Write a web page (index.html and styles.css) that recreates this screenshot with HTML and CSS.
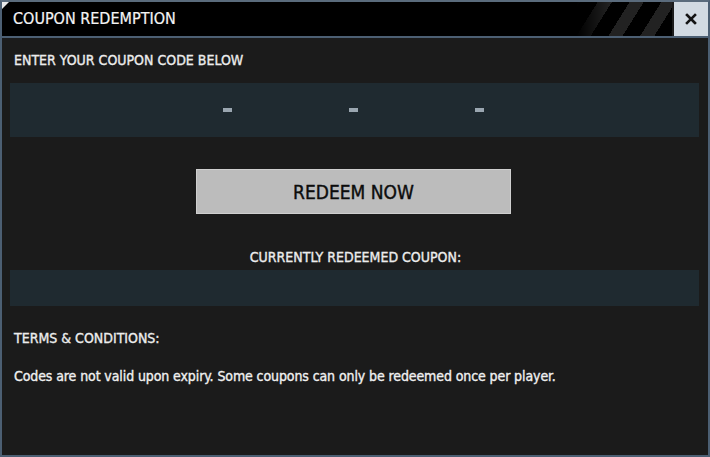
FILE: index.html
```html
<!DOCTYPE html>
<html>
<head>
  <title>Coupon Redemption</title>
  <link rel="stylesheet" href="styles.css">
</head>
<body>
  <div class="window">
    <div class="header">
      <div class="title">
        <span class="corner"></span>
        COUPON REDEMPTION
        <div class="stripes"></div>
      </div>
      <div class="close">
        <svg width="12" height="12" viewBox="0 0 12 12">
          <path d="M2 2 L10 10 M10 2 L2 10" stroke="#141414" stroke-width="2.6" stroke-linecap="square"/>
        </svg>
      </div>
    </div>

    <div class="content">
      <p class="label">ENTER YOUR COUPON CODE BELOW</p>
      <div class="code-field">
        <span class="dash"></span>
        <span class="dash"></span>
        <span class="dash"></span>
      </div>

      <div class="actions">
        <button class="redeem">REDEEM NOW</button>
      </div>

      <p class="label center">CURRENTLY REDEEMED COUPON:</p>
      <div class="current-field"></div>

      <p class="label terms">TERMS &amp; CONDITIONS:</p>
      <p class="note">Codes are not valid upon expiry. Some coupons can only be redeemed once per player.</p>
    </div>
  </div>
</body>
</html>
```

FILE: styles.css
```css
html {
  width: 100vw;
  height: 100vh;
}

body {
  margin: 0;
  background-color: #3e4a56;
  font-family: "DejaVu Sans Condensed", sans-serif;
}

.window {
  height: 457px;
  box-sizing: border-box;
  border: 2px solid #4c5f73;
  border-top-color: #5a6b7c;
  background-color: #1b1b1b;
  display: flex;
  flex-direction: column;
}

.header {
  display: flex;
  height: 34px;
  border-bottom: 2px solid #4c5f73;
}

.title {
  position: relative;
  flex: 1;
  background-color: #000;
  color: #f4f4f4;
  font-size: 16px;
  line-height: 34px;
  padding-left: 11px;
  overflow: hidden;
  -webkit-text-stroke: 0.2px #f4f4f4;
}

.corner {
  position: absolute;
  left: 0;
  top: 0;
  width: 0;
  height: 0;
  border-top: 7px solid #e8e8e8;
  border-right: 7px solid transparent;
}

.stripes {
  position: absolute;
  right: 0;
  top: 0;
  width: 95px;
  height: 34px;
  background: repeating-linear-gradient(
    -58deg,
    transparent 0px,
    transparent 15px,
    #222 15px,
    #222 27px
  );
  -webkit-mask-image: linear-gradient(to right, transparent, #000 35%);
}

.close {
  width: 34px;
  margin-left: 2px;
  background-color: #d2dae2;
  display: flex;
  align-items: center;
  justify-content: center;
}

.content {
  flex: 1;
  padding: 0 9px 0 8px;
}

.label {
  color: #ececec;
  font-size: 14px;
  margin: 14px 0 0 4px;
  line-height: 16px;
  -webkit-text-stroke: 0.35px #ececec;
}

.label.center {
  text-align: center;
  margin: 35px 0 0 2px;
}

.label.terms {
  margin-top: 24px;
}

.code-field {
  height: 54px;
  margin-top: 15px;
  background-color: #1f2a30;
  display: flex;
  align-items: center;
  padding-left: 213px;
  gap: 117px;
}

.dash {
  width: 9px;
  height: 4px;
  background-color: #9aa6b0;
}

.actions {
  display: flex;
  justify-content: center;
  margin-top: 32px;
  padding-right: 2px;
}

.redeem {
  width: 315px;
  height: 45px;
  border: 1px solid #cfcfcf;
  background-color: #bcbcbc;
  color: #0c0c0c;
  font-family: "DejaVu Sans Condensed", sans-serif;
  font-size: 19px;
  -webkit-text-stroke: 0.4px #0c0c0c;
}

.current-field {
  height: 36px;
  margin-top: 5px;
  background-color: #1f2a30;
}

.note {
  color: #f0f0f0;
  font-size: 14px;
  margin: 22px 0 0 4px;
  letter-spacing: -0.1px;
  -webkit-text-stroke: 0.35px #f0f0f0;
}
```
